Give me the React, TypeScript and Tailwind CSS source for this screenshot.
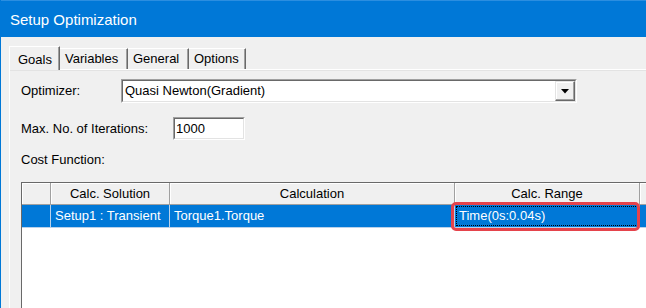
import React from "react";

const tabBase =
  "h-[21px] px-[5px] flex items-center border-t border-l border-white border-r border-r-[#696969] shadow-[inset_-1px_0_0_#a0a0a0] bg-[#f0f0f0] text-[13px] text-black";

function HeaderCell({ w, children }: { w: string; children?: React.ReactNode }) {
  return (
    <div
      className={`${w} h-full shrink-0 flex items-center justify-center border-r border-b border-[#a0a0a0] shadow-[inset_1px_1px_0_#ffffff] bg-[#f0f0f0] text-black`}
    >
      {children}
    </div>
  );
}

function RowCell({ w, children, focus }: { w: string; children?: React.ReactNode; focus?: boolean }) {
  return (
    <div className={`${w} h-full shrink-0 border-r border-b border-[#b9d1ea] bg-[#0078d7] text-white p-[1px]`}>
      <div
        className={`h-full flex items-center pl-[2px] ${focus ? "border border-dotted border-black" : "border border-transparent"}`}
      >
        {children}
      </div>
    </div>
  );
}

export default function App() {
  return (
    <div
      className="w-[646px] h-[308px] overflow-hidden bg-[#f0f0f0] border-l border-[#0078d7] flex flex-col"
      style={{ fontFamily: '"Liberation Sans", Arial, sans-serif' }}
    >
      {/* Title bar */}
      <div className="h-[37px] shrink-0 bg-[#0078d7] border-t border-[#2b8ee0] flex items-center pl-[9px] pt-[2px]">
        <span className="text-white text-[15px]">Setup Optimization</span>
      </div>

      {/* Tabs */}
      <div className="pl-[8px] pt-[9px] flex flex-col">
        <div className="flex items-end h-[24px] relative z-10">
          <div className="h-[24px] w-[51px] pl-[8px] flex items-start pt-[3px] border-t border-l border-white border-r border-r-[#696969] shadow-[inset_-1px_0_0_#a0a0a0] bg-[#f0f0f0] text-[13px] text-black">
            Goals
          </div>
          <div className={`${tabBase} w-[68px] border-l-0 mb-[1px]`}>Variables</div>
          <div className={`${tabBase} w-[61px] border-l-0 mb-[1px]`}>General</div>
          <div className={`${tabBase} w-[57px] border-l-0 mb-[1px]`}>Options</div>
        </div>

        {/* Panel */}
        <div className="-mt-[1px] border-t border-l border-white shadow-[inset_0_1px_0_#e3e3e3] flex flex-col pl-[11px] pt-[9px] text-[13px] text-black h-[240px]">
          {/* Optimizer row */}
          <div className="flex items-center h-[24px]">
            <span className="w-[100px] shrink-0">Optimizer:</span>
            <div className="w-[456px] h-[24px] shrink-0 border-t border-l border-[#a0a0a0] border-r border-b border-r-white border-b-white">
              <div className="h-full border-t border-l border-[#696969] border-r border-b border-r-[#e3e3e3] border-b-[#e3e3e3] bg-white flex items-center">
                <span className="pl-[2px] flex-1">Quasi Newton(Gradient)</span>
                <div className="w-[20px] h-[20px] border-t border-l border-[#e3e3e3] border-r border-b border-r-[#696969] border-b-[#696969] shadow-[inset_-1px_-1px_0_#a0a0a0,inset_1px_1px_0_#ffffff] bg-[#f0f0f0] flex items-center justify-center">
                  <svg width="8" height="5" viewBox="0 0 8 5">
                    <polygon points="0,0 8,0 4,4.5" fill="#000" />
                  </svg>
                </div>
              </div>
            </div>
          </div>

          {/* Iterations row */}
          <div className="flex items-center h-[23px] mt-[14px]">
            <span className="w-[152px] shrink-0">Max. No. of Iterations:</span>
            <div className="w-[72px] h-[23px] shrink-0 border-t border-l border-[#a0a0a0] border-r border-b border-r-white border-b-white">
              <div className="h-full border-t border-l border-[#696969] border-r border-b border-r-[#e3e3e3] border-b-[#e3e3e3] bg-white flex items-center pl-[1px]">
                1000
              </div>
            </div>
          </div>

          <div className="mt-[12px] h-[16px] leading-[16px]">Cost Function:</div>

          {/* Table */}
          <div className="mt-[14px] relative w-[700px] flex-1 border border-[#696969] bg-white flex flex-col">
            <div className="h-[22px] flex">
              <HeaderCell w="w-[29px]" />
              <HeaderCell w="w-[119px]">Calc. Solution</HeaderCell>
              <HeaderCell w="w-[285px]">Calculation</HeaderCell>
              <HeaderCell w="w-[185px]">Calc. Range</HeaderCell>
              <HeaderCell w="w-[80px]" />
            </div>
            <div className="h-[23px] flex">
              <RowCell w="w-[29px]" />
              <RowCell w="w-[119px]">Setup1 : Transient</RowCell>
              <RowCell w="w-[285px]">Torque1.Torque</RowCell>
              <RowCell w="w-[185px]" focus>
                Time(0s:0.04s)
              </RowCell>
              <RowCell w="w-[80px]" />
            </div>
            <div className="absolute left-[429px] top-[19px] w-[189px] h-[29px] border-[3px] border-[#e5434b] rounded-[5px]" />
          </div>
        </div>
      </div>
    </div>
  );
}
